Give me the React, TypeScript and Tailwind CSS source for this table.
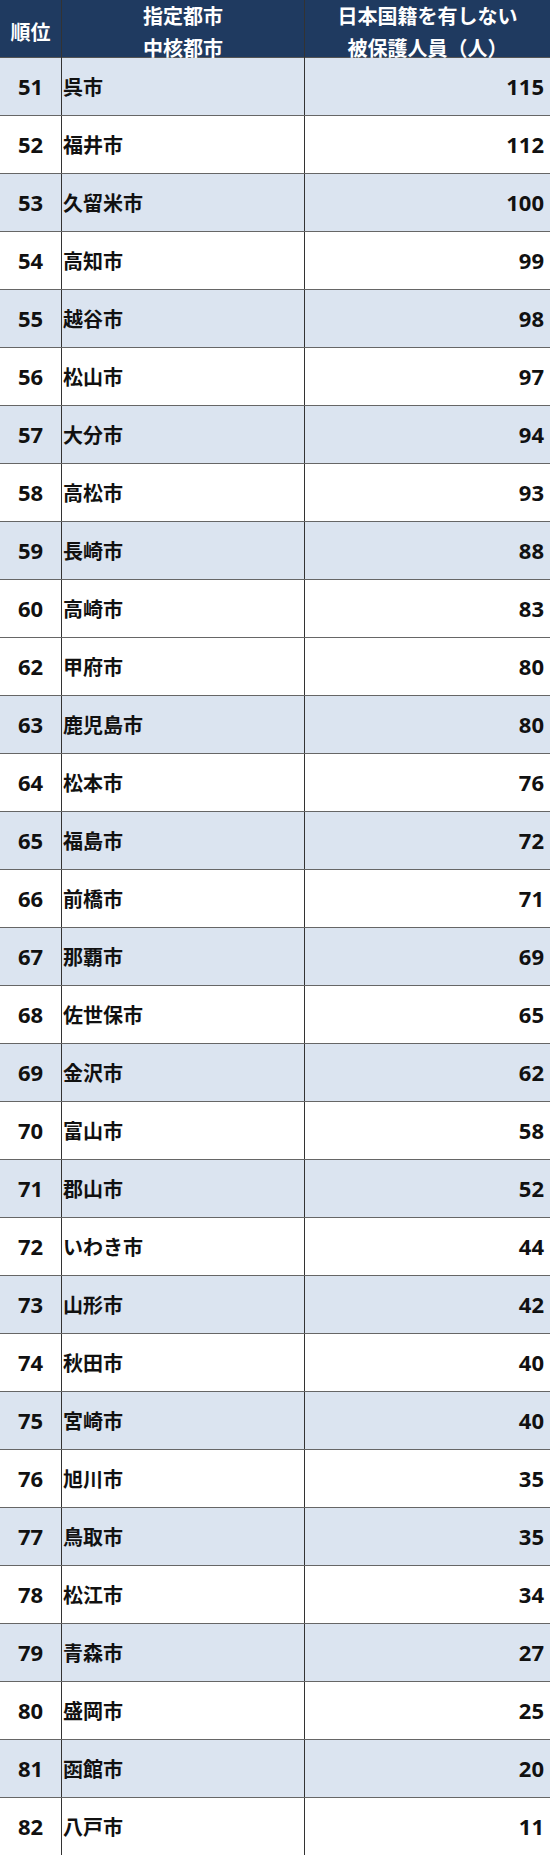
const rows: [number, string, number][] = [
  [51, "呉市", 115],
  [52, "福井市", 112],
  [53, "久留米市", 100],
  [54, "高知市", 99],
  [55, "越谷市", 98],
  [56, "松山市", 97],
  [57, "大分市", 94],
  [58, "高松市", 93],
  [59, "長崎市", 88],
  [60, "高崎市", 83],
  [62, "甲府市", 80],
  [63, "鹿児島市", 80],
  [64, "松本市", 76],
  [65, "福島市", 72],
  [66, "前橋市", 71],
  [67, "那覇市", 69],
  [68, "佐世保市", 65],
  [69, "金沢市", 62],
  [70, "富山市", 58],
  [71, "郡山市", 52],
  [72, "いわき市", 44],
  [73, "山形市", 42],
  [74, "秋田市", 40],
  [75, "宮崎市", 40],
  [76, "旭川市", 35],
  [77, "鳥取市", 35],
  [78, "松江市", 34],
  [79, "青森市", 27],
  [80, "盛岡市", 25],
  [81, "函館市", 20],
  [82, "八戸市", 11],
]

const jp = "font-['Noto_Sans_CJK_JP','Noto_Sans',sans-serif]"
const num = "font-['Noto_Sans','Noto_Sans_CJK_JP',sans-serif] text-[22px]"

export default function App() {
  return (
    <div className={`w-[550px] bg-white text-[#111] ${jp}`}>
      {/* Header */}
      <div className="grid grid-cols-[62px_243px_1fr] h-[58px] bg-[#1f3a60] text-white font-bold text-[20px] border-b border-[#555]">
        <div className="flex items-center justify-center border-r border-[#333]">順位</div>
        <div className="flex flex-col items-center justify-center leading-[32px] border-r border-[#333]">
          <span>指定都市</span>
          <span>中核都市</span>
        </div>
        <div className="flex flex-col items-center justify-center leading-[32px]">
          <span>日本国籍を有しない</span>
          <span>被保護人員（人）</span>
        </div>
      </div>

      {/* Rows: odd ranks are shaded */}
      {rows.map(([rank, city, count]) => (
        <div
          key={rank}
          className={`grid grid-cols-[62px_243px_1fr] h-[58px] border-b border-[#666] font-bold text-[20px] ${
            rank % 2 === 1 ? "bg-[#dbe4f0]" : "bg-white"
          }`}
        >
          <div className={`flex items-center justify-center border-r border-[#333] ${num}`}>{rank}</div>
          <div className="flex items-center pl-[1px] border-r border-[#333]">{city}</div>
          <div className={`flex items-center justify-end pr-[6px] ${num}`}>{count}</div>
        </div>
      ))}
    </div>
  )
}
